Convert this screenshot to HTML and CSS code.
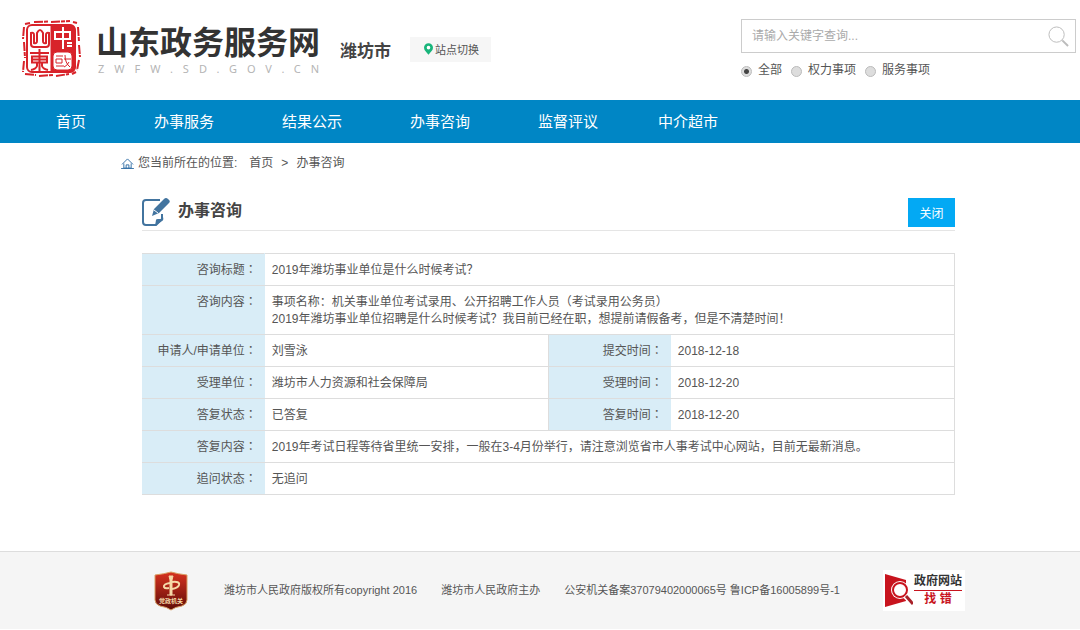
FILE: index.html
```html
<!DOCTYPE html>
<html lang="zh-CN">
<head>
    <meta charset="UTF-8">
    <meta name="viewport" content="width=device-width, initial-scale=1.0">
    <title>山东政务服务网 - 办事咨询</title>
    <link rel="stylesheet" href="styles.css">
</head>
<body>
    <header class="header">
        <svg class="seal" viewBox="0 0 60 58" fill="none" stroke="#d8232a">
            <path d="M3 4L8 3M12 2L26 1.500M29 2L48 1M51 2L55 3M2 7L1 19M2 22L3 38M2 41L1 52M3 54L14 55M17 56L31 55M34 56L47 54M50 54L54 52M56 7L57 22M57 25L58 37M57 40L55 50" stroke-width="2" stroke-dasharray="9 1 4 1"/>
            <rect x="5" y="5" width="48" height="47" rx="5" fill="#fff" stroke-width="2"/>
            <path d="M29 5h19q5 0 5 5v37q0 5-5 5H29z" fill="#d8232a"/>
            <!-- 山 -->
            <path d="M9 13v11q0 3 3 3h12q3 0 3-3V13q-3-1-3 2v8q-3 1-3-2v-8q-3-6-6 0v8q0 3-3 2v-8q0-3-3-2z" stroke-width="2"/>
            <!-- 東 -->
            <path d="M8 33h19M17.500 29v22M10 36.500h15v6H10zM10 39.500h15M15 43v3q-1 3-6 4M20 43v3q1 3 6 4" stroke-width="2"/>
            <!-- 中 -->
            <path d="M33 12h15v7H33zM41 7v22M45 23h5M45 26h5" stroke="#fff" stroke-width="2"/>
            <!-- 國 -->
            <rect x="31" y="32" width="19" height="18" rx="4" fill="#fff"/>
            <path d="M34 36h7M34 39h6v4h-6zM34 46h8M43 35q0 8 5 12M42 39h7M47 42q-2 4-5 5" stroke-width="1"/>
        </svg>
        <div class="site">
            <h1 class="site-name">山东政务服务网</h1>
            <div class="site-domain">ZWFW.SD.GOV.CN</div>
        </div>
        <div class="city">潍坊市</div>
        <button class="switch-btn" type="button">
            <svg class="pin" viewBox="0 0 10 13"><path d="M5 0a5 5 0 0 0-5 5c0 3 3 5 5 8 2-3 5-5 5-8a5 5 0 0 0-5-5z" fill="#19b57b"/><circle cx="5" cy="5" r="2" fill="#fff"/></svg>
            站点切换
        </button>
        <form class="search">
            <div class="search-box">
                <input class="search-input" type="text" placeholder="请输入关键字查询..." aria-label="关键字">
                <button class="search-btn" type="button" aria-label="搜索">
                    <svg viewBox="0 0 22 22" fill="none" stroke="#bbb"><circle cx="9" cy="9" r="8"/><path d="M15 15l6 6" stroke-width="2"/></svg>
                </button>
            </div>
            <div class="search-types">
                <input type="radio" name="type" id="typeAll" checked><label for="typeAll">全部</label>
                <input type="radio" name="type" id="typePower"><label for="typePower">权力事项</label>
                <input type="radio" name="type" id="typeService"><label for="typeService">服务事项</label>
            </div>
        </form>
    </header>

    <nav class="nav">
        <a href="#">首页</a>
        <a href="#">办事服务</a>
        <a href="#">结果公示</a>
        <a href="#">办事咨询</a>
        <a href="#">监督评议</a>
        <a href="#">中介超市</a>
    </nav>

    <div class="breadcrumb">
        <svg class="home" viewBox="0 0 14 12" fill="none" stroke="#2b6aa3"><path d="M1 7l6-6 6 6M3 6v5h8V6M5.500 11V7.500h3V11M0 11.500h14"/></svg>
        <span class="here">您当前所在的位置:</span>
        <a href="#">首页</a>
        <span>&gt;</span>
        <a href="#">办事咨询</a>
    </div>

    <main class="content">
        <div class="content-header">
            <svg class="edit" viewBox="0 0 28 29">
                <path d="M18 2H4Q1 2 1 5v19q0 3 3 3h10l6-6v-5" fill="none" stroke="#42749f" stroke-width="2"/>
                <path d="M13 28l1-6q0-1 2-1h5v-2q1 3-1 4z" fill="#42749f"/>
                <path d="M22 1q2-2 4 0 3 2 1 4L17 15l-7 3 2-7z" fill="#42749f"/>
                <path d="M12 12l4 3" stroke="#fff"/>
            </svg>
            <h2 class="content-title">办事咨询</h2>
            <button class="close-btn" type="button">关闭</button>
        </div>
        <table class="detail">
            <colgroup>
                <col class="col-label"><col class="col-value"><col class="col-label"><col class="col-value">
            </colgroup>
            <tr>
                <th>咨询标题：</th>
                <td colspan="3">2019年潍坊事业单位是什么时候考试？</td>
            </tr>
            <tr>
                <th>咨询内容：</th>
                <td colspan="3">事项名称：机关事业单位考试录用、公开招聘工作人员（考试录用公务员）<br>2019年潍坊事业单位招聘是什么时候考试？我目前已经在职，想提前请假备考，但是不清楚时间！</td>
            </tr>
            <tr>
                <th>申请人/申请单位：</th>
                <td>刘雪泳</td>
                <th>提交时间：</th>
                <td>2018-12-18</td>
            </tr>
            <tr>
                <th>受理单位：</th>
                <td>潍坊市人力资源和社会保障局</td>
                <th>受理时间：</th>
                <td>2018-12-20</td>
            </tr>
            <tr>
                <th>答复状态：</th>
                <td>已答复</td>
                <th>答复时间：</th>
                <td>2018-12-20</td>
            </tr>
            <tr>
                <th>答复内容：</th>
                <td colspan="3">2019年考试日程等待省里统一安排，一般在3-4月份举行，请注意浏览省市人事考试中心网站，目前无最新消息。</td>
            </tr>
            <tr>
                <th>追问状态：</th>
                <td colspan="3">无追问</td>
            </tr>
        </table>
    </main>

    <footer class="footer">
        <svg class="badge" viewBox="0 0 34 40">
            <defs>
                <linearGradient id="badgeFill" x1="0" y1="0" x2="0" y2="1">
                    <stop offset="0" stop-color="#d8321f"/>
                    <stop offset="1" stop-color="#5e0d08"/>
                </linearGradient>
            </defs>
            <path d="M1 4Q10 3 17 1q7 2 16 3v25q0 4-5 6-7 1-11 4-4-3-11-4-5-2-5-6z" fill="url(#badgeFill)" stroke="#d9a066"/>
            <path d="M15 5h4l-1 4v15h-2V9zM13 24h8" fill="#f6d9a8" stroke="#f6d9a8"/>
            <path d="M18 11q8-1 7 3-1 3-7 4M16 12q-7 1-6 4 1 2 5 1" fill="none" stroke="#f6d9a8" stroke-width="2"/>
            <text x="17" y="32" text-anchor="middle" class="badge-text">党政机关</text>
        </svg>
        <div class="footer-text">
            <span>潍坊市人民政府版权所有copyright 2016</span>
            <span>潍坊市人民政府主办</span>
            <span>公安机关备案37079402000065号 鲁ICP备16005899号-1</span>
        </div>
        <a class="report" href="#">
            <svg class="report-icon" viewBox="0 0 28 34">
                <path d="M0 0l21 6v21L0 33z" fill="#c8141e"/>
                <circle cx="15" cy="16" r="9" fill="#fff"/>
                <circle cx="15" cy="16" r="7" fill="#fff" stroke="#c8141e" stroke-width="2"/>
                <path d="M20 22l8 8" stroke="#fff" stroke-width="5"/>
                <path d="M21 22l7 8" stroke="#a8222a" stroke-width="3"/>
            </svg>
            <span class="report-text">
                <span class="report-top">政府网站</span>
                <span class="report-bottom">找 错</span>
            </span>
        </a>
    </footer>
</body>
</html>
```
FILE: styles.css
```css
* {
    box-sizing: border-box;
}
body {
    margin: 0;
    font-family: "Liberation Sans", "Noto Sans CJK SC", sans-serif;
    font-size: 12px;
    color: #555;
    background-color: #fff;
}
a {
    color: inherit;
    text-decoration: none;
}
button {
    border: none;
    font-family: inherit;
    cursor: pointer;
}
svg {
    display: block;
    flex-shrink: 0;
}
.header {
    display: flex;
    align-items: center;
    height: 100px;
    padding: 0 4px 2px 22px;
}
.seal {
    width: 60px;
    height: 58px;
    margin-right: 14px;
}
.site {
    padding-top: 4px;
    margin-right: 20px;
    white-space: nowrap;
}
.site-name {
    margin: 0;
    font-size: 32px;
    line-height: 36px;
    color: #333;
}
.site-domain {
    padding-left: 2px;
    font-family: "Noto Sans", sans-serif;
    font-size: 11px;
    line-height: 16px;
    letter-spacing: 10px;
    margin-right: -10px;
    color: #b5b5b5;
}
.city {
    margin-right: 19px;
    font-size: 17px;
    font-weight: bold;
    color: #444;
    white-space: nowrap;
}
.switch-btn {
    display: flex;
    align-items: center;
    gap: 2px;
    height: 25px;
    padding: 0 12px 0 14px;
    font-size: 11px;
    color: #555;
    background-color: #f6f6f6;
    white-space: nowrap;
}
.pin {
    width: 9px;
    height: 12px;
}
.search {
    width: 335px;
    margin-left: auto;
}
.search-box {
    display: flex;
    align-items: center;
    height: 34px;
    padding-right: 6px;
    border: 1px solid #ccc;
}
.search-input {
    flex: 1;
    min-width: 0;
    padding: 0 10px;
    border: none;
    outline: none;
    font-family: inherit;
    font-size: 12px;
    color: #555;
}
.search-input::placeholder {
    color: #aaa;
}
.search-btn {
    padding: 0;
    background: none;
}
.search-btn svg {
    width: 21px;
    height: 21px;
}
.search-types {
    display: flex;
    align-items: center;
    margin-top: 8px;
    line-height: 18px;
}
.search-types input {
    appearance: none;
    width: 11px;
    height: 11px;
    margin: 2px 6px 0 0;
    border: 1px solid #bbb;
    border-radius: 50%;
    background: #ddd;
}
.search-types input:checked {
    background: radial-gradient(circle, #444 2px, #ddd 3px);
}
.search-types label {
    margin-right: 9px;
}
.nav {
    display: flex;
    padding-left: 22px;
    background-color: #0086c5;
    font-size: 15px;
    line-height: 43px;
    color: #fff;
}
.nav a {
    padding: 0 34px;
}
.nav a:last-child {
    padding-left: 26px;
}
.breadcrumb {
    display: flex;
    align-items: center;
    gap: 8px;
    padding: 11px 0 0 121px;
    line-height: 18px;
}
.home {
    width: 13px;
    height: 11px;
    margin-right: -4px;
}
.here {
    margin-right: 4px;
}
.content {
    padding: 25px 125px 56px 142px;
}
.content-header {
    display: flex;
    align-items: center;
    height: 34px;
    margin-bottom: 22px;
    padding-bottom: 2px;
    border-bottom: 1px solid #e5e5e5;
}
.edit {
    width: 28px;
    height: 29px;
}
.content-title {
    margin: 0 0 0 8px;
    font-size: 16px;
    line-height: 20px;
    padding-bottom: 3px;
    color: #444;
}
.close-btn {
    width: 47px;
    height: 29px;
    margin-left: auto;
    padding: 0;
    font-size: 12px;
    color: #fff;
    background-color: #03a9f4;
}
.detail {
    width: 100%;
    table-layout: fixed;
    border-collapse: collapse;
    line-height: 17px;
}
.col-label {
    width: 15%;
}
.col-value {
    width: 35%;
}
.detail th,
.detail td {
    padding: 8px 7px 6px;
    border: 1px solid #ddd;
    vertical-align: top;
}
/* the TC face centres the full-width colon */
.detail th {
    font-family: "Liberation Sans", "Noto Sans CJK TC", sans-serif;
    font-feature-settings: "locl" 0;
    font-weight: normal;
    text-align: right;
    background-color: #d9edf7;
    border-left-color: #d9edf7;
    border-right-color: #d9edf7;
}
.detail td {
    text-align: left;
}
.footer {
    display: flex;
    align-items: center;
    height: 78px;
    padding: 0 115px 0 154px;
    background-color: #f5f5f5;
    border-top: 1px solid #ddd;
    font-size: 11px;
}
.badge {
    width: 34px;
    height: 40px;
}
.badge-text {
    font-size: 6px;
    font-weight: bold;
    fill: #f6d9a8;
}
.footer-text {
    display: flex;
    gap: 24px;
    margin-left: 36px;
    padding-bottom: 3px;
    white-space: nowrap;
}
.report {
    display: flex;
    align-items: center;
    gap: 1px;
    height: 41px;
    margin-left: auto;
    padding: 0 3px 0 2px;
    background-color: #fff;
}
.report-icon {
    width: 28px;
    height: 34px;
}
.report-text {
    display: flex;
    flex-direction: column;
    font-weight: bold;
    text-align: center;
    line-height: 17px;
    font-size: 12px;
}
.report-top {
    color: #333;
    border-bottom: 1px solid #c8141e;
}
.report-bottom {
    color: #c8141e;
}
```
